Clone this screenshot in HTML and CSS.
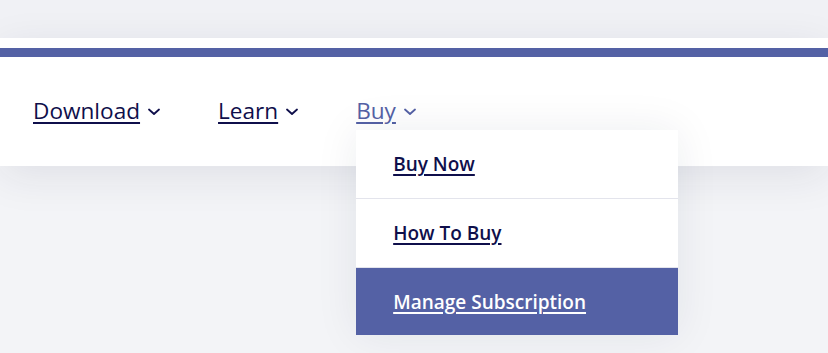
FILE: index.html
```html
<!DOCTYPE html>
<html lang="en">
<head>
  <meta charset="UTF-8">
  <meta name="viewport" content="width=device-width, initial-scale=1.0">
  <title>Navigation</title>
  <link rel="stylesheet" href="styles.css">
</head>
<body>

  <div class="top-strip"></div>

  <div class="site-header">
    <div class="accent-bar"></div>
    <nav class="main-nav">
      <div class="nav-item">
        <a href="#">Download</a>
        <svg class="chevron" viewBox="0 0 12 8" width="12" height="8"><path d="M1 1.5 L6 6 L11 1.5" /></svg>
      </div>
      <div class="nav-item">
        <a href="#">Learn</a>
        <svg class="chevron" viewBox="0 0 12 8" width="12" height="8"><path d="M1 1.5 L6 6 L11 1.5" /></svg>
      </div>
      <div class="nav-item open">
        <a href="#">Buy</a>
        <svg class="chevron" viewBox="0 0 12 8" width="12" height="8"><path d="M1 1.5 L6 6 L11 1.5" /></svg>

        <ul class="dropdown">
          <li><a href="#">Buy Now</a></li>
          <li><a href="#">How To Buy</a></li>
          <li class="active"><a href="#">Manage Subscription</a></li>
        </ul>
      </div>
    </nav>
  </div>

  <div class="page-body"></div>

</body>
</html>
```

FILE: styles.css
```css
body {
  font-family: "Open Sans", "Noto Sans", sans-serif;
  margin: 0;
  padding: 0;
  background-color: #f3f4f7;
}

.top-strip {
  height: 38px;
  background-color: #f0f1f5;
}

.site-header {
  position: relative;
  z-index: 2;
  background-color: #fff;
  padding-top: 10px;
  box-shadow: 0 10px 40px rgba(30, 35, 70, 0.09);
}

.accent-bar {
  height: 9px;
  background-color: #5461a5;
}

.main-nav {
  display: flex;
  height: 109px;
  padding-left: 33px;
  box-sizing: border-box;
  padding-top: 39px;
}

.nav-item {
  position: relative;
  display: flex;
  align-items: baseline;
  margin-right: 58px;
  height: 36px;
}

.nav-item a {
  font-size: 22.6px;
  color: #0f0f4b;
  text-decoration: underline;
  text-decoration-thickness: 2px;
  text-underline-offset: 3px;
  line-height: 30px;
}

.chevron {
  margin-left: 8px;
  fill: none;
  stroke: #0f0f4b;
  stroke-width: 1.8;
  stroke-linecap: round;
  stroke-linejoin: round;
  position: relative;
  top: -3px;
}

.nav-item.open > a {
  color: #5461a5;
}

.nav-item.open .chevron {
  stroke: #5461a5;
}

.dropdown {
  position: absolute;
  top: 34px;
  left: 0;
  width: 322px;
  margin: 0;
  padding: 0;
  list-style: none;
  background-color: #fff;
  box-shadow: 0 0 40px rgba(30, 35, 70, 0.08);
}

.dropdown li {
  height: 68px;
  display: flex;
  align-items: center;
  padding-left: 37px;
  border-bottom: 1px solid #e3e4ec;
}

.dropdown li:last-child {
  border-bottom: none;
  height: 67px;
}

.dropdown li a {
  font-size: 19px;
  font-weight: 600;
  color: #0f0f4b;
  text-decoration: underline;
  text-decoration-thickness: 2px;
  text-underline-offset: 3px;
}

.dropdown li.active {
  background-color: #5461a5;
}

.dropdown li.active a {
  color: #fff;
}

.page-body {
  height: 200px;
}
```
